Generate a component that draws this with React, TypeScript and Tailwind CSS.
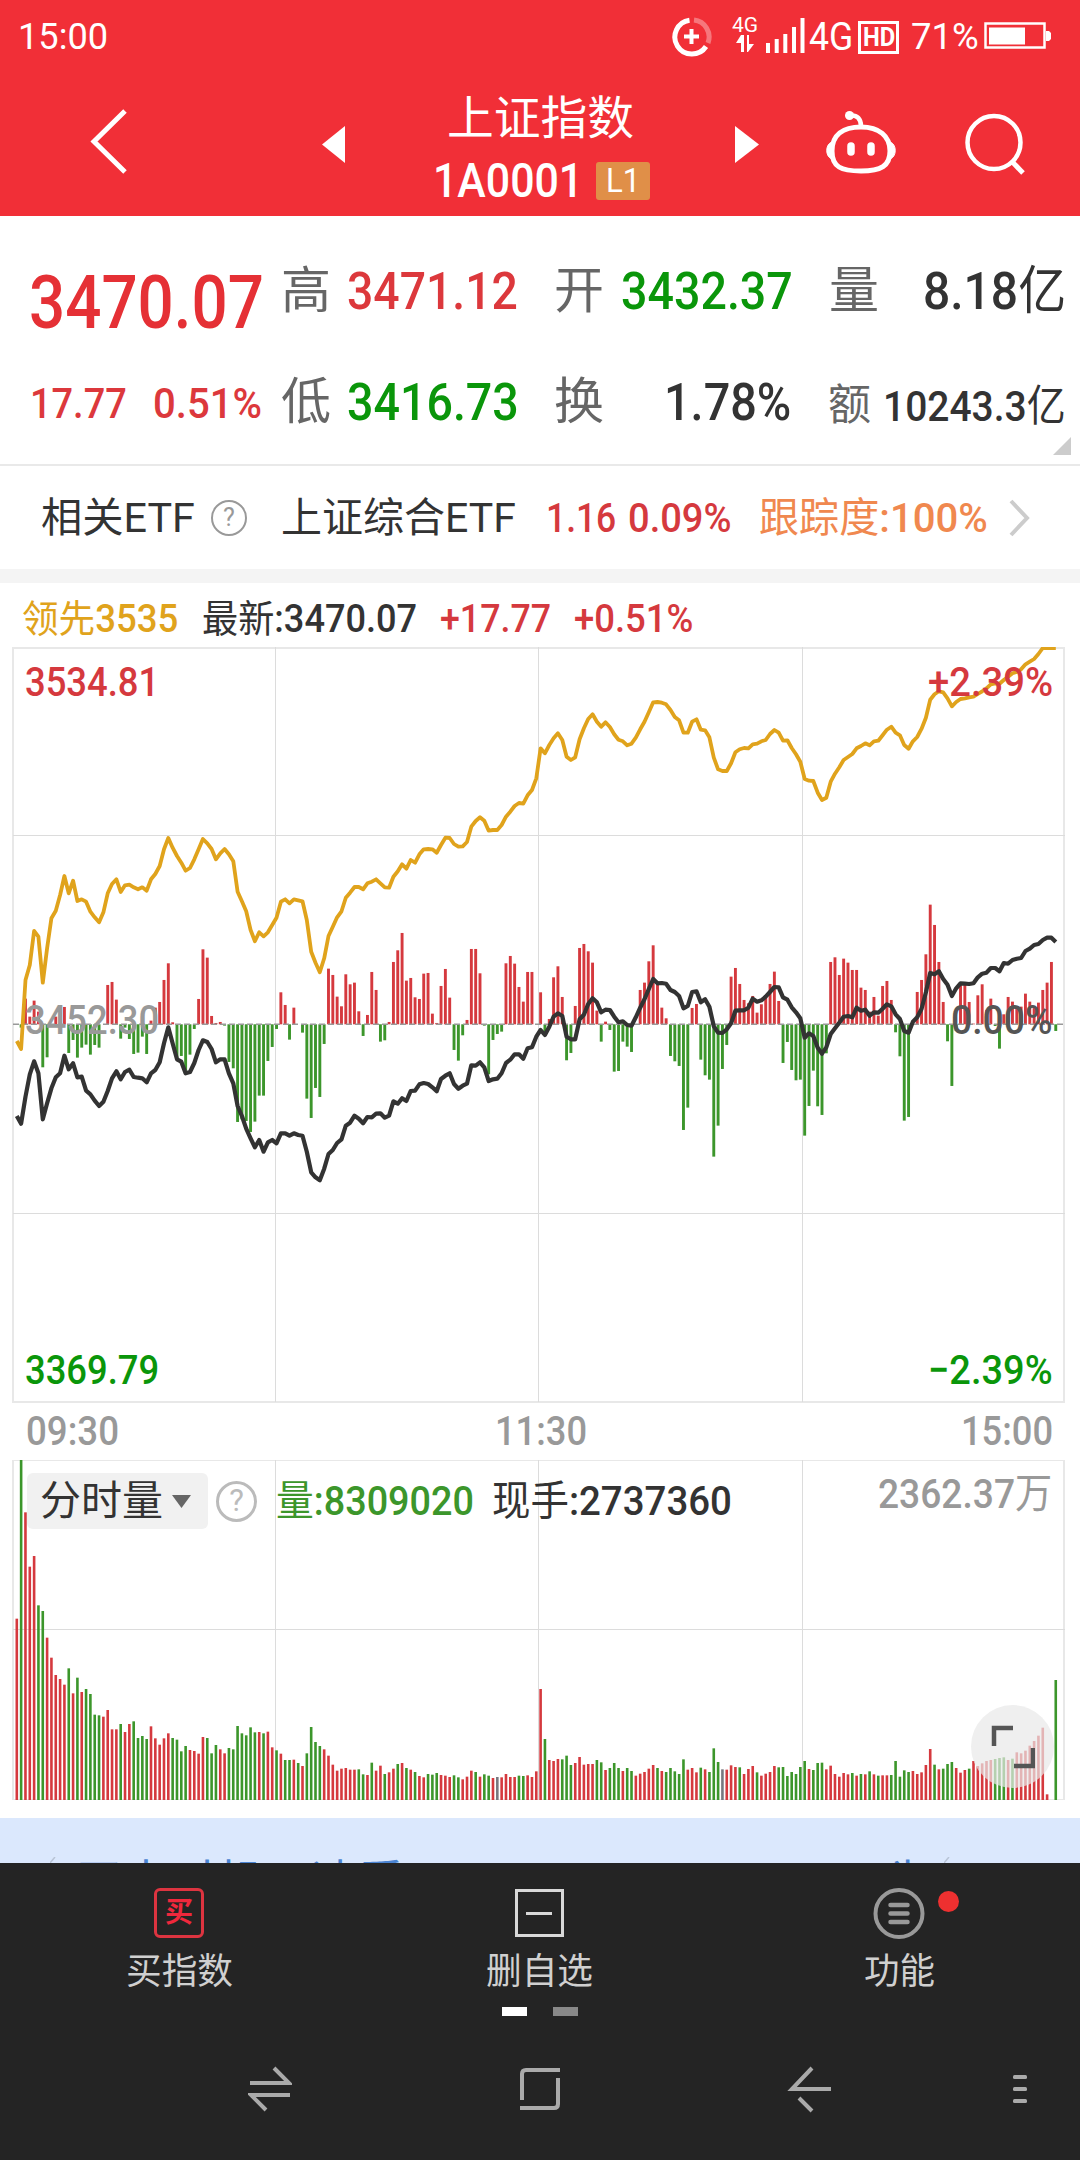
import React, { useLayoutEffect, useRef, useState } from 'react';

// One entry per trading minute, in thirds of a pixel
const momentum = [
  0, -10, 77, 23, 71, 38, -129, -99, 0, 23, 35, 52, -86, -47, -100, -70, -61, -91, -62, -70,
  0, 118, 127, 74, -43, -10, -44, -89, -85, -37, -89, 11, 50, 67, 133, 183, 6, -104, -95, -139,
  -91, -14, 76, 225, 200, 25, 4, 7, -4, -113, -132, -293, -285, -290, -323, -292, -214, -214, -110, -68,
  -14, 96, 58, -46, 50, 0, -25, -223, -281, -191, -218, -59, 167, 148, 83, 54, 150, 120, 125, 39,
  -35, 28, 157, 103, -52, -48, 7, 187, 222, 274, 131, 139, 81, 76, 152, 154, 32, 4, 115, 166,
  80, -77, -109, -33, 13, 226, 226, 153, -4, -150, -47, -29, -22, 183, 205, 182, 112, 68, 157, 157,
  0, 96, -22, 16, 141, 174, 82, -108, -86, 55, 229, 241, 219, 185, 41, -52, 8, -17, -142, -140,
  -52, -67, -83, 0, 103, 125, 189, 237, 128, 50, 18, -95, -111, -125, -317, -250, 49, 61, -106, -153,
  -166, -397, -304, -134, -62, 143, 169, 121, 73, 63, 85, 35, 60, 83, 121, 158, 70, -116, -53, -137,
  -168, -166, -334, -245, -139, -246, -272, -87, 187, 201, 148, 197, 185, 163, 163, 110, 103, 38, 82, 26,
  115, 130, 73, -24, -96, -289, -278, 0, 97, 133, 210, 359, 298, 187, 67, -51, -185, -20, 123, 123,
  67, 2, 87, 120, 43, 77, -5, -73, 30, 82, 68, 53, 53, 92, 68, 53, 65, 103, 125, 187, -20,
];

const indexLine = [
  768, 791, 710, 643, 604, 640, 778, 730, 685, 652, 640, 587, 628, 610, 652, 650, 692, 703, 722, 738,
  725, 693, 655, 634, 658, 636, 629, 651, 653, 655, 667, 640, 630, 607, 550, 502, 550, 598, 605, 640,
  636, 609, 570, 541, 546, 567, 607, 598, 598, 640, 670, 738, 768, 806, 835, 862, 840, 875, 847, 840,
  850, 820, 820, 827, 820, 825, 827, 875, 937, 952, 961, 926, 882, 870, 849, 838, 797, 788, 767, 776,
  790, 771, 772, 761, 760, 773, 767, 724, 731, 715, 723, 693, 692, 673, 669, 672, 682, 694, 657, 647,
  640, 672, 686, 677, 671, 616, 617, 607, 622, 663, 658, 656, 640, 609, 599, 583, 583, 596, 565, 562,
  530, 510, 525, 500, 470, 460, 468, 530, 538, 538, 478, 464, 432, 415, 427, 457, 449, 450, 470, 487,
  484, 495, 497, 472, 443, 418, 387, 357, 370, 369, 371, 390, 396, 408, 445, 438, 396, 394, 427, 418,
  440, 499, 518, 519, 508, 490, 452, 451, 451, 443, 416, 425, 421, 410, 396, 381, 382, 412, 419, 442,
  457, 475, 533, 520, 528, 563, 581, 562, 522, 505, 488, 470, 468, 472, 443, 452, 449, 467, 457, 458,
  446, 433, 439, 463, 477, 513, 518, 485, 472, 446, 397, 339, 343, 334, 357, 374, 408, 385, 370, 371,
  372, 370, 352, 341, 338, 324, 324, 334, 309, 311, 300, 296, 294, 273, 266, 255, 252, 240, 233, 233, 246,
];

const leadLine = [
  543, 567, 360, 315, 213, 230, 368, 265, 175, 152, 105, 48, 100, 62, 123, 118, 125, 155, 172, 187,
  157, 100, 72, 58, 96, 76, 74, 82, 88, 82, 92, 58, 42, 18, -32, -66, -37, -12, 8, 32,
  24, -2, -32, -63, -50, -33, -2, -20, -33, -17, 4, 95, 124, 154, 210, 244, 217, 229, 217, 195,
  173, 125, 118, 130, 118, 121, 124, 180, 275, 308, 337, 295, 228, 200, 172, 154, 113, 98, 81, 81,
  88, 70, 65, 58, 70, 82, 83, 50, 34, 13, 26, 0, 8, -17, -32, -33, -32, -22, -45, -67,
  -66, -48, -40, -41, -54, -100, -117, -128, -118, -88, -90, -90, -105, -130, -145, -162, -171, -169, -194, -210,
  -245, -335, -320, -345, -365, -380, -360, -310, -300, -308, -362, -395, -423, -437, -415, -400, -413, -399, -377, -361,
  -356, -344, -349, -367, -392, -415, -443, -473, -474, -472, -467, -450, -429, -419, -382, -382, -415, -422, -391, -389,
  -368, -307, -272, -267, -267, -290, -323, -332, -336, -335, -347, -349, -356, -360, -378, -390, -382, -358, -359, -336,
  -317, -295, -243, -238, -237, -202, -180, -187, -235, -259, -278, -300, -309, -318, -335, -342, -350, -344, -356, -358,
  -374, -391, -400, -382, -374, -345, -334, -356, -369, -394, -427, -481, -497, -506, -503, -485, -461, -474, -483, -485,
  -488, -490, -498, -506, -515, -527, -530, -529, -540, -550, -560, -564, -572, -587, -595, -603, -618, -636, -636, -636, -636,
];

// Negative values are falling minutes
const volume = [
  544, -1022, 863, 700, 732, -584, -567, 487, 427, 375, 363, 346, -395, 320, -367, 324, -333, -318, -256, -254,
  250, 270, 212, 212, -228, 204, 228, -236, -186, -192, -183, 221, 185, 166, 185, 200, -186, -181, -146, -162,
  150, 147, 139, 189, -186, -140, -165, 152, 140, -156, -152, -222, -200, -194, -218, -203, 204, -200, 205, 158,
  -149, 139, -120, -120, 121, -111, 102, -140, -219, -174, -162, 152, 133, 106, 88, 94, 96, 91, 91, -92,
  -77, 75, -112, 88, 103, -78, 83, 94, -108, 111, -96, 91, -84, 72, 68, -78, -76, -81, 75, 73,
  69, -74, -68, 62, 70, 88, -84, 70, -77, -73, 66, 69, 68, 78, 69, 69, -73, -72, 74, 69,
  86, 333, -183, 120, 117, 123, -122, -133, -105, 111, 129, 106, 108, 108, -120, -113, 90, -96, -111, -96,
  87, -96, -87, 73, 79, 84, 94, 105, -96, 87, -84, -96, -86, -78, -122, 91, 96, 83, -97, 92,
  -84, -155, -114, 92, 91, 104, 99, -98, 78, 93, 102, -83, 73, 79, 84, 102, -98, -99, -72, -84,
  -78, -99, -117, 93, -90, -111, -112, 92, 103, 78, 70, 81, 77, -81, 73, -78, 77, -86, 77, -73,
  74, 74, -75, -117, -70, -89, -84, 87, 78, 83, 105, 153, -106, 92, -94, -108, -114, 96, 82, 90,
  -94, 117, 102, 110, 117, 120, -123, -126, -128, 120, -124, 143, 140, 148, 163, 177, 193, 217, 17, 0, -360,
];

const flatMinutes = [111, 163];

const RED = '#d5393e';
const GREEN = '#3c962b';

const minuteX = (i: number) => 3.8 + i * 4.329;
const toPath = (values: number[]) =>
  values.map((v, i) => `${i ? 'L' : 'M'}${minuteX(i).toFixed(1)} ${(213 + v / 3).toFixed(1)}`).join('');

// Squeezes a label horizontally so it fills the width of its box
const Fit: React.FC<{ className: string; children: React.ReactNode }> = ({ className, children }) => {
  const box = useRef<HTMLSpanElement>(null);
  const text = useRef<HTMLSpanElement>(null);
  const [scale, setScale] = useState(1);

  useLayoutEffect(() => {
    if (box.current && text.current) setScale(box.current.clientWidth / text.current.offsetWidth);
  }, []);

  return (
    <span ref={box} className={`block shrink-0 whitespace-nowrap ${className}`}>
      <span ref={text} className="inline-block origin-left" style={{ transform: `scaleX(${scale})` }}>
        {children}
      </span>
    </span>
  );
};

const Cn: React.FC<{ children: React.ReactNode }> = ({ children }) => <span className="font-normal">{children}</span>;

const StatusBar = () => (
  <div className="flex h-[74px] items-center text-white">
    <Fit className="ml-[18px] w-[90px] text-[37px] leading-[76px]">15:00</Fit>
    <svg className="ml-[564px] shrink-0" width="40" height="40" viewBox="0 0 40 40" fill="none" stroke="#fff">
      <path d="M17.5 3.2A17 17 0 1 0 34 29.5" strokeWidth="5" />
      <path d="M22 3.1A17 17 0 0 1 36 26" strokeWidth="5" opacity=".35" />
      <path d="M19.5 12v15M12 19.5h15" strokeWidth="4" />
    </svg>
    <div className="ml-[20px] flex h-[42px] w-[26px] flex-col items-center">
      <Fit className="w-[26px] text-[21px] leading-[18px]">4G</Fit>
      <svg width="20" height="20" viewBox="0 0 20 20" fill="#fff">
        <path d="M6 1h3v17H6V9H1zM12 1h2v9h5l-6 8h-1z" />
      </svg>
    </div>
    <svg className="ml-[8px] shrink-0" width="40" height="38" viewBox="0 0 40 38" fill="#fff">
      <path d="M0 25h4v10H0zM8.700 21h4v14h-4zM17.300 16h4v19h-4zM26 9h4v26h-4zM34.500 0h4v35h-4z" />
    </svg>
    <Fit className="ml-[3px] w-[44px] text-[38px] leading-[76px]">4G</Fit>
    <span className="ml-[5px] block h-[33px] w-[41px] border-[3px] border-white pl-[2px]">
      <Fit className="w-[32px] text-[26px] font-bold leading-[27px]">HD</Fit>
    </span>
    <Fit className="ml-[12px] w-[68px] text-[37px] leading-[76px]">71%</Fit>
    <svg className="-mt-[2px] ml-[5px] shrink-0" width="68" height="28" viewBox="0 0 68 28">
      <rect x="1.500" y="1.500" width="59" height="24" fill="none" stroke="#fff" strokeWidth="2.500" />
      <path d="M5 5.500h36v17H5zM62 9h3l2 2v6l-2 2h-3z" fill="#fff" />
    </svg>
  </div>
);

const TitleBar = () => (
  <div className="flex h-[142px] items-start text-white">
    <svg className="ml-[88px] mt-[33px] shrink-0" width="42" height="68" viewBox="0 0 42 68" fill="none">
      <path d="M37 4 6 34.500 37 65" stroke="#fff" strokeWidth="5" />
    </svg>
    <svg className="ml-[192px] mt-[52px] shrink-0" width="23" height="37" viewBox="0 0 23 37" fill="#fff">
      <path d="M23 0v37L0 18.500z" />
    </svg>
    <div className="w-[390px] pt-[12px]">
      <Fit className="mx-auto w-[187px] text-[46px] leading-[64px]">上证指数</Fit>
      <div className="ml-[88px] flex h-[62px] items-center">
        <Fit className="w-[150px] text-[48px] font-medium leading-[62px]">1A0001</Fit>
        <span className="ml-[13px] flex h-[38px] w-[54px] justify-center rounded-[3px] bg-[#e08f48]">
          <Fit className="w-[34px] text-[33px] leading-[38px]">L1</Fit>
        </span>
      </div>
    </div>
    <svg className="mt-[52px] shrink-0" width="24" height="37" viewBox="0 0 24 37" fill="#fff">
      <path d="M0 0v37l24-18.500z" />
    </svg>
    <svg className="ml-[66px] mt-[36px] shrink-0" width="72" height="66" viewBox="0 0 72 66" fill="none" stroke="#fff">
      <path d="M36 17C54 17 65 26 65 41S56 61 36 61 7 57 7 41 18 17 36 17z" strokeWidth="5" />
      <path d="M36 16C36 9 32 5 26 5.500" strokeWidth="4.500" />
      <circle cx="24.500" cy="5.500" r="4.500" fill="#fff" stroke="none" />
      <path d="M7 32c-7 2-7 15 0 17zM65 32c7 2 7 15 0 17z" fill="#fff" strokeWidth="1" />
      <path d="M26 36v6M46 36v6" strokeWidth="7.500" strokeLinecap="round" />
    </svg>
    <svg className="ml-[67px] mt-[39px] shrink-0" width="62" height="62" viewBox="0 0 62 62" fill="none" stroke="#fff">
      <circle cx="30" cy="29.500" r="26.500" strokeWidth="4.500" />
      <path d="M48 48.500 59 60" strokeWidth="5" />
    </svg>
  </div>
);

const Quote = () => (
  <section className="relative h-[250px] border-b-2 border-[#e9e9e9] font-medium text-[#333]">
    <div className="flex h-[150px] items-center">
      <Fit className="ml-[29px] mt-[23px] w-[235px] text-[74px] leading-[80px] text-[#e53035]">3470.07</Fit>
      <Fit className="ml-[17px] w-[50px] text-[50px] font-normal leading-[80px] text-[#666]">高</Fit>
      <Fit className="ml-[16px] mt-[2px] w-[171px] text-[52px] leading-[80px] text-[#dc383c]">3471.12</Fit>
      <Fit className="ml-[36px] w-[50px] text-[50px] font-normal leading-[80px] text-[#666]">开</Fit>
      <Fit className="ml-[17px] mt-[2px] w-[172px] text-[52px] leading-[80px] text-[#0a960a]">3432.37</Fit>
      <Fit className="ml-[36px] w-[50px] text-[50px] font-normal leading-[80px] text-[#666]">量</Fit>
      <Fit className="ml-[44px] mt-[2px] w-[143px] text-[52px] leading-[80px]">8.18<Cn>亿</Cn></Fit>
    </div>
    <div className="flex h-[74px] items-center">
      <Fit className="ml-[30px] w-[97px] text-[43px] leading-[72px] text-[#dc383c]">17.77</Fit>
      <Fit className="ml-[26px] w-[109px] text-[43px] leading-[72px] text-[#dc383c]">0.51%</Fit>
      <Fit className="-mt-[2px] ml-[19px] w-[50px] text-[50px] font-normal leading-[72px] text-[#666]">低</Fit>
      <Fit className="ml-[16px] w-[172px] text-[52px] leading-[72px] text-[#0a960a]">3416.73</Fit>
      <Fit className="-mt-[2px] ml-[35px] w-[50px] text-[50px] font-normal leading-[72px] text-[#666]">换</Fit>
      <Fit className="ml-[60px] w-[127px] text-[52px] leading-[72px]">1.78%</Fit>
      <Fit className="ml-[37px] mt-[3px] w-[43px] text-[43px] font-normal leading-[72px] text-[#666]">额</Fit>
      <Fit className="ml-[12px] mt-[5px] w-[183px] text-[43px] leading-[72px]">10243.3<Cn>亿</Cn></Fit>
    </div>
    <svg className="absolute bottom-[9px] right-[9px]" width="18" height="18" fill="#ccc">
      <path d="M18 0v18H0z" />
    </svg>
  </section>
);

const HelpIcon: React.FC<{ className: string; color: string }> = ({ className, color }) => (
  <span className={`flex shrink-0 items-center justify-center rounded-full font-normal ${className} ${color}`}>?</span>
);

const EtfRow = () => (
  <section className="flex h-[103px] items-center text-[41px] leading-[106px] text-[#333]">
    <Fit className="ml-[41px] w-[154px]">相关ETF</Fit>
    <HelpIcon className="ml-[16px] h-[36px] w-[36px] border-2 text-[25px] leading-[32px]" color="border-[#999] text-[#999]" />
    <Fit className="ml-[34px] w-[235px]">上证综合ETF</Fit>
    <Fit className="ml-[30px] mt-px w-[70px] font-medium text-[#d5393e]">1.16</Fit>
    <Fit className="ml-[12px] mt-px w-[104px] font-medium text-[#d5393e]">0.09%</Fit>
    <Fit className="ml-[27px] w-[229px] text-[#f0884f]">跟踪度<span className="font-medium">:100%</span></Fit>
    <svg className="ml-[20px] shrink-0" width="24" height="38" viewBox="0 0 24 38" fill="none">
      <path d="m3 2 16 17L3 36" stroke="#ccc" strokeWidth="4" />
    </svg>
  </section>
);

const PriceChart = () => (
  <section>
    <div className="flex h-[64px] items-center pt-[7px] text-[38px] font-medium leading-[58px] text-[#333]">
      <Fit className="ml-[22px] w-[156px] text-[#e0a31c]"><Cn>领先</Cn>3535</Fit>
      <Fit className="ml-[24px] w-[215px]"><Cn>最新</Cn>:3470.07</Fit>
      <Fit className="ml-[23px] w-[111px] text-[#d5393e]">+17.77</Fit>
      <Fit className="ml-[23px] w-[119px] text-[#d5393e]">+0.51%</Fit>
    </div>
    <div className="relative ml-[12px] h-[756px] w-[1053px] text-[41px] font-medium leading-[48px]">
      <svg className="absolute inset-0" width="1053" height="756" viewBox="-1 0 1053 756" fill="none">
        <rect x="0" y="1" width="1051" height="754" stroke="#e8e8e8" strokeWidth="2" />
        <path d="M262.500 0v755M525.500 0v755M789.500 0v755M0 188.500h1052M0 566.500h1052" stroke="#dcdcdc" />
        {momentum.map((v, i) => (
          <rect
            key={i}
            x={minuteX(i) - 1.45}
            y={v > 0 ? 377.3 - v / 3 : 377.3}
            width="2.900"
            height={Math.abs(v) / 3}
            fill={v > 0 ? RED : GREEN}
          />
        ))}
        <path d="M0 377.300h1050" stroke="#999" strokeWidth="1.500" strokeDasharray="6 3" />
        <path d={toPath(leadLine)} stroke="#e0a31c" strokeWidth="3.800" strokeLinejoin="round" />
        <path d={toPath(indexLine)} stroke="#333" strokeWidth="4.200" strokeLinejoin="round" />
      </svg>
      <Fit className="absolute left-[13px] top-[11px] w-[134px] text-[#d5393e]">3534.81</Fit>
      <Fit className="absolute right-[12px] top-[11px] w-[125px] text-[#d5393e]">+2.39%</Fit>
      <Fit className="absolute left-[13px] top-[349px] w-[134px] text-[#999]">3452.30</Fit>
      <Fit className="absolute right-[12px] top-[349px] w-[102px] text-[#555]">0.00%</Fit>
      <Fit className="absolute bottom-[9px] left-[13px] w-[134px] text-[#0a960a]">3369.79</Fit>
      <Fit className="absolute bottom-[9px] right-[12px] w-[125px] text-[#0a960a]">−2.39%</Fit>
    </div>
    <div className="flex h-[57px] items-center text-[41px] font-medium leading-[59px] text-[#999]">
      <Fit className="ml-[26px] w-[93px]">09:30</Fit>
      <Fit className="ml-[376px] w-[92px]">11:30</Fit>
      <Fit className="ml-[374px] w-[92px]">15:00</Fit>
    </div>
  </section>
);

const VolumeChart = () => (
  <section className="relative ml-[12px] h-[340px] w-[1053px]">
    <svg className="absolute inset-0" width="1053" height="340" viewBox="-1 0 1053 340" fill="none">
      <rect x="0" y="0" width="1051" height="340" stroke="#e8e8e8" strokeWidth="2" />
      <path d="M262.500 0v340M525.500 0v340M789.500 0v340M0 169.500h1052" stroke="#dcdcdc" />
      {volume.map((v, i) => (
        <rect
          key={i}
          x={minuteX(i) - 1.3}
          y={340 - Math.abs(v) / 3}
          width="2.600"
          height={Math.abs(v) / 3}
          fill={flatMinutes.includes(i) ? '#77777f' : v > 0 ? RED : GREEN}
        />
      ))}
    </svg>
    <div className="relative flex h-[82px] items-center text-[41px] font-medium leading-[57px] text-[#333]">
      <span className="ml-[15px] flex h-[56px] w-[181px] items-center rounded-[6px] bg-[#f1f1f1]">
        <Fit className="ml-[13px] w-[123px] font-normal">分时量</Fit>
        <svg className="ml-[9px]" width="19" height="13" fill="#666">
          <path d="M0 0h19l-9.500 13z" />
        </svg>
      </span>
      <HelpIcon className="ml-[8px] h-[41px] w-[41px] border-[3px] text-[31px] leading-[36px]" color="border-[#bbb] text-[#bbb]" />
      <Fit className="ml-[19px] w-[198px] text-[#3c962b]"><Cn>量</Cn>:8309020</Fit>
      <Fit className="ml-[18px] w-[240px]"><Cn>现手</Cn>:2737360</Fit>
      <Fit className="-mt-[14px] ml-[146px] w-[174px] text-[#999]">2362.37<Cn>万</Cn></Fit>
    </div>
    <span className="absolute bottom-[12px] right-[11px] flex h-[83px] w-[83px] items-center justify-center rounded-full bg-[#e8e8e8]/70">
      <svg width="44" height="44" viewBox="0 0 44 44" fill="none" stroke="#555" strokeWidth="4.500">
        <path d="M3 21V3h19M42 23v18H23" />
      </svg>
    </span>
  </section>
);

const Banner = () => (
  <div className="mt-[18px] h-[45px] overflow-hidden bg-[#dbe8fd] pt-[37px] text-[46px] leading-[54px] text-[#4a84d2]">
    <div className="flex">
      <svg className="ml-[50px] mt-[2px]" width="6" height="6"><path d="M0 6 5 0" stroke="#b9c4d6" strokeWidth="1.500" /></svg>
      <Fit className="ml-[19px] w-[330px]">买卖时机，速看</Fit>
      <Fit className="ml-[421px] w-[26px]">6</Fit>
      <Fit className="ml-[35px] w-[46px]">为</Fit>
      <svg className="ml-[11px] mt-[2px]" width="6" height="6"><path d="M0 6 5 0" stroke="#b9c4d6" strokeWidth="1.500" /></svg>
    </div>
  </div>
);

const Toolbar = () => (
  <div className="grid grid-cols-3 justify-items-center pt-[25px] text-[36px] leading-[50px] text-[#d0d0d0]">
    <div className="-ml-[2px] flex flex-col items-center">
      <span className="flex h-[50px] w-[50px] items-center justify-center rounded-[6px] border-[3px] border-[#dd3440] text-[28px] font-bold leading-[44px] text-[#f0283c]">
        买
      </span>
      <Fit className="mt-[9px] w-[107px]">买指数</Fit>
    </div>
    <div className="-ml-[2px] flex flex-col items-center">
      <span className="my-px flex h-[48px] w-[49px] items-center justify-center border-[3px] border-[#d8d8d8]">
        <span className="h-[3px] w-[26px] bg-[#d8d8d8]" />
      </span>
      <Fit className="mt-[9px] w-[107px]">删自选</Fit>
    </div>
    <div className="relative -ml-[2px] flex flex-col items-center">
      <svg width="52" height="52" viewBox="0 0 52 52" fill="none" stroke="#999">
        <circle cx="26" cy="25.500" r="23.500" strokeWidth="4" />
        <path d="M17.500 17h17M17.500 25.500h17M17.500 34h17" strokeWidth="4.500" strokeLinecap="round" />
      </svg>
      <span className="absolute -right-[24px] top-[3px] h-[21px] w-[21px] rounded-full bg-[#ee3030]" />
      <Fit className="mt-[7px] w-[71px]">功能</Fit>
    </div>
  </div>
);

const NavBar = () => (
  <div className="mt-[48px] flex items-center">
    <svg className="ml-[248px]" width="44" height="50" viewBox="0 0 44 50" fill="none" stroke="#aaa" strokeWidth="4">
      <path d="M2 19h39L26 4M42 31H3l15 15" />
    </svg>
    <svg className="ml-[226px]" width="44" height="46" viewBox="0 0 44 46" fill="none" stroke="#aaa" strokeWidth="4">
      <path d="M42 4H8Q4 4 4 8v26M2 42h34q4 0 4-4V12" />
    </svg>
    <svg className="ml-[225px]" width="46" height="50" viewBox="0 0 46 50" fill="none" stroke="#aaa" strokeWidth="4">
      <path d="M44 25H5L25 4M12 34l13 13" />
    </svg>
    <svg className="ml-[180px]" width="14" height="30" viewBox="0 0 14 30" fill="#aaa">
      <rect width="14" height="4" rx="1.500" y="1" />
      <rect width="14" height="4" rx="1.500" y="13" />
      <rect width="14" height="4" rx="1.500" y="25" />
    </svg>
  </div>
);

export default function App() {
  return (
    <div className="h-[2160px] w-[1080px] overflow-hidden bg-white font-[Roboto,'Noto_Sans_CJK_SC',sans-serif]">
      <header className="h-[216px] bg-[#f12f37]">
        <StatusBar />
        <TitleBar />
      </header>
      <Quote />
      <EtfRow />
      <div className="h-[14px] bg-[#f4f4f4]" />
      <PriceChart />
      <VolumeChart />
      <Banner />
      <footer className="h-[297px] bg-[#242424]">
        <Toolbar />
        <div className="mt-[10px] flex justify-center gap-[26px]">
          <span className="h-[9px] w-[25px] bg-white" />
          <span className="h-[9px] w-[25px] bg-[#888]" />
        </div>
        <NavBar />
      </footer>
    </div>
  );
}
